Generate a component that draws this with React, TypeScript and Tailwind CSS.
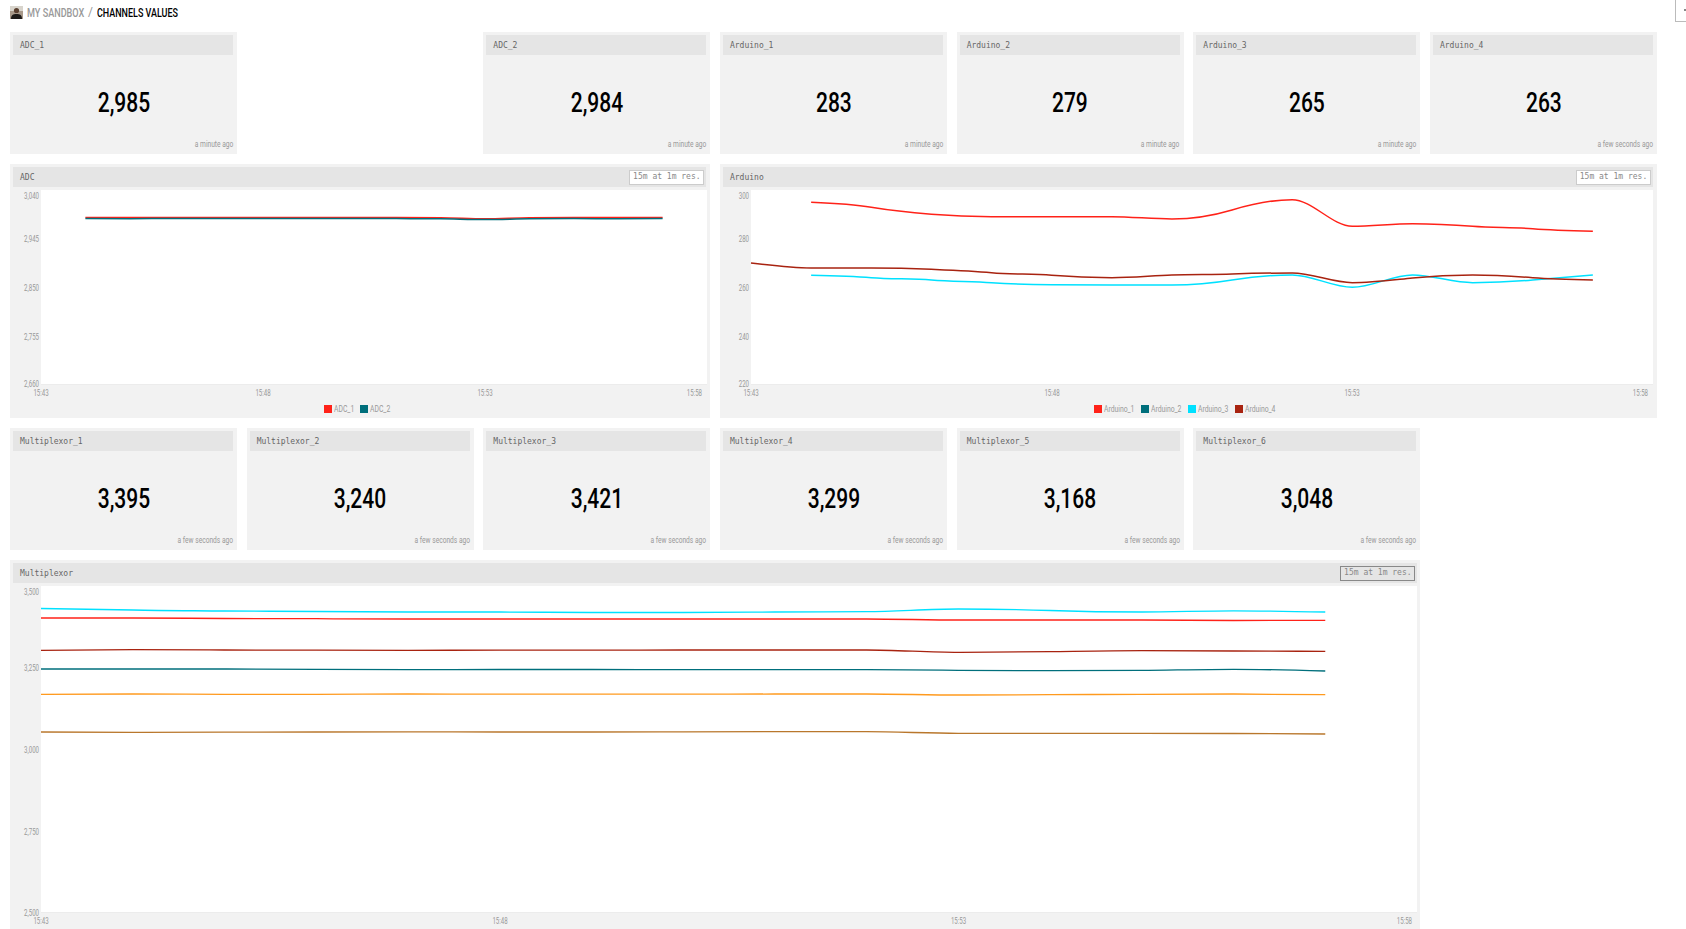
const cardFont = "font-['Roboto',sans-serif]";
const monoFont = "font-['DejaVu_Sans_Mono',monospace]";

type Series = { color: string; from: number; ys: number[] };

const RED = "#ff2219";
const TEAL = "#006f7c";
const CYAN = "#00e1ff";
const MAROON = "#a82310";
const ORANGE = "#ff9a1e";
const BROWN = "#b9772c";

// monotone line through points one minute apart
function linePath(s: Series, left: number, step: number) {
  const ys = s.ys;
  const n = ys.length;
  const m = ys.slice(1).map((y, i) => (y - ys[i]) / step);
  const t = ys.map((_, i) => {
    if (i === 0 || i === n - 1) return 0;
    const a = m[i - 1];
    const b = m[i];
    if (a * b <= 0) return 0;
    return Math.sign(a) * Math.min(Math.abs(a), Math.abs(b), 0.5 * Math.abs(a + b)) * 2;
  });
  t[0] = (3 * m[0] - t[1]) / 2;
  t[n - 1] = (3 * m[n - 2] - t[n - 2]) / 2;
  const xAt = (i: number) => left + (s.from + i) * step;
  let d = `M${xAt(0)} ${ys[0]}`;
  for (let i = 0; i < n - 1; i++) {
    const c1y = ys[i] + (t[i] * step) / 3;
    const c2y = ys[i + 1] - (t[i + 1] * step) / 3;
    d += ` C${xAt(i) + step / 3} ${c1y} ${xAt(i + 1) - step / 3} ${c2y} ${xAt(i + 1)} ${ys[i + 1]}`;
  }
  return d;
}

function Value({ name, value, ago }: { name: string; value: string; ago: string }) {
  return (
    <div className="h-[122px] bg-[#f2f2f2] pl-[3px] pr-[4px] pt-[3px] flex flex-col">
      <div className={`h-5 shrink-0 bg-[#e5e5e5] pl-[7px] pt-[1px] flex items-center ${monoFont} text-[8px] text-[#666]`}>
        {name}
      </div>
      <div className="flex-1 flex items-center justify-center pt-[12px] pl-[1px]">
        <span className={`inline-block scale-x-[0.75] ${cardFont} font-medium text-[28px] leading-none text-black`}>
          {value}
        </span>
      </div>
      <div className="h-[16px] shrink-0 flex justify-end">
        <span className={`inline-block origin-right scale-x-[0.78] ${cardFont} text-[8.5px] leading-[12px] text-[#999] whitespace-nowrap`}>
          {ago}
        </span>
      </div>
    </div>
  );
}

function Range({ dark }: { dark?: boolean }) {
  return (
    <div
      className={
        dark
          ? `w-[75px] h-[15px] border border-[#888] flex items-center justify-center ${monoFont} text-[8px] text-[#888]`
          : `w-[75px] h-[15px] border border-[#ccc] bg-white flex items-center justify-center ${monoFont} text-[8px] text-[#888]`
      }
    >
      15m at 1m res.
    </div>
  );
}

function Axis({ x, y, anchor = "end", label }: { x: number; y: number; anchor?: "end" | "start" | "middle"; label: string }) {
  return (
    <text
      transform={`translate(${x} ${y}) scale(0.72 1)`}
      textAnchor={anchor}
      fontFamily="Roboto, sans-serif"
      fontSize="8.5"
      fill="#999"
    >
      {label}
    </text>
  );
}

type ChartProps = {
  width: number;
  height: number;
  plotW: number;
  plotH: number;
  stroke?: number;
  yLabels: [string, number][];
  xLabels: [string, number][];
  series: Series[];
};

// coordinates are relative to the chart area under the panel header
function Chart({ width, height, plotW, plotH, stroke = 1.3, yLabels, xLabels, series }: ChartProps) {
  const step = plotW / 15;
  return (
    <svg width={width} height={height} className="block">
      <rect x="28" y="0" width={plotW} height={plotH} fill="#fff" />
      <line x1="28" x2={28 + plotW} y1={plotH + 0.5} y2={plotH + 0.5} stroke="#ececec" />
      {yLabels.map(([label, y]) => (
        <Axis key={label} x={26} y={y} label={label} />
      ))}
      {xLabels.map(([label, x], i) => (
        <Axis key={label} x={x} y={plotH + 12} anchor={i === xLabels.length - 1 ? "end" : "middle"} label={label} />
      ))}
      {series.map((s) => (
        <path key={s.color} d={linePath(s, 28, step)} fill="none" stroke={s.color} strokeWidth={stroke} />
      ))}
    </svg>
  );
}

function Legend({ items, labelClass }: { items: [string, string][]; labelClass: string }) {
  return (
    <div className="h-[20px] flex items-start justify-center gap-[7px] pt-[6px] pr-[7px]">
      {items.map(([name, color]) => (
        <div key={name} className="flex items-center gap-[2px]">
          <span className="w-2 h-2" style={{ backgroundColor: color }} />
          <span className={`inline-block ${labelClass} origin-left scale-x-[0.8] ${cardFont} text-[8.5px] leading-[10px] text-[#999] whitespace-nowrap`}>
            {name}
          </span>
        </div>
      ))}
    </div>
  );
}

function Panel({ title, dark, children, className }: { title: string; dark?: boolean; children: React.ReactNode; className: string }) {
  return (
    <div className={`bg-[#f2f2f2] pl-[3px] pt-[3px] ${className}`}>
      <div className={`h-5 mb-[3px] bg-[#e5e5e5] pl-[7px] pr-[2px] flex items-center justify-between ${monoFont} text-[8px] text-[#666]`}>
        <span className="pt-[1px]">{title}</span>
        <Range dark={dark} />
      </div>
      {children}
    </div>
  );
}

const arduino: Series[] = [
  { color: RED, from: 1, ys: [12.3, 17.3, 24.3, 26.7, 26.7, 26.7, 29, 20, 9.7, 36.3, 33.7, 36.3, 38.7, 41.3] },
  { color: CYAN, from: 1, ys: [85.3, 87.7, 90, 92.7, 94.7, 95, 95, 90, 85, 97.3, 85, 92.7, 90, 85] },
  { color: MAROON, from: 0, ys: [73, 78, 78, 79.3, 82.7, 85.3, 87.7, 85, 84, 83, 92.7, 88, 85, 87.7, 90] },
];

const adc: Series[] = [
  { color: RED, from: 1, ys: [27.4, 27.6, 27.6, 27.6, 27.6, 27.6, 27.6, 27.6, 27.7, 28.7, 27.7, 27.5, 27.5, 27.5] },
  { color: TEAL, from: 1, ys: [28.5, 28.7, 28.5, 28.5, 28.5, 28.5, 28.5, 28.6, 28.8, 29.5, 28.8, 28.6, 28.7, 28.6] },
];

const mux: Series[] = [
  { color: CYAN, from: 0, ys: [22.5, 24, 25, 25.5, 26, 26, 26.5, 26.5, 26, 25.7, 23, 24.5, 26, 24.8, 26] },
  { color: RED, from: 0, ys: [32, 32, 32.5, 32.7, 33, 33, 33, 33, 33, 33, 34, 34, 34, 34.5, 34.3] },
  { color: MAROON, from: 0, ys: [64.3, 63.7, 64, 64.2, 64.3, 64.2, 64.2, 64, 64, 64, 66.3, 65.7, 64.7, 65, 65.3] },
  { color: TEAL, from: 0, ys: [83, 83, 83, 83.3, 83.7, 83.5, 83.5, 83.7, 83.7, 83.7, 84.3, 84.7, 84.3, 83.3, 85] },
  { color: ORANGE, from: 0, ys: [108.3, 108, 108.3, 108.4, 108, 108.2, 108.2, 108.2, 108, 108, 109, 108.7, 108.3, 108, 108.7] },
  { color: BROWN, from: 0, ys: [146, 146.3, 146.2, 146, 145.8, 146, 146, 145.8, 145.7, 145.7, 147.3, 147.3, 147.3, 147.5, 148] },
];

export default function App() {
  return (
    <div className="relative h-[929px] overflow-hidden bg-white">
      <div className="h-[32px] pl-[10px] pt-[6px] flex items-start">
        <svg width="13" height="13" viewBox="0 0 13 13" className="block mr-[4px]">
          <rect width="13" height="13" fill="#a8998a" />
          <rect y="0" width="13" height="5" fill="#d8d4cc" />
          <circle cx="6.5" cy="4.5" r="2.6" fill="#5a4030" />
          <path d="M1 13 C1 9 3 8 6.5 8 C10 8 12 9 12 13 Z" fill="#1d1a18" />
        </svg>
        <span className={`inline-block w-[57px] origin-left scale-x-[0.7] ${cardFont} font-medium text-[13px] leading-[13px] text-[#999] whitespace-nowrap`}>
          MY SANDBOX
        </span>
        <span className={`inline-block w-[13px] ${cardFont} text-[12px] leading-[13px] text-[#999] pl-[4px]`}>/</span>
        <span className={`inline-block w-[81px] origin-left scale-x-[0.69] ${cardFont} font-medium text-[13px] leading-[13px] text-black whitespace-nowrap`}>
          CHANNELS VALUES
        </span>
      </div>
      <div className="absolute right-0 top-0 w-[11px] h-[22px] border-l border-b border-[#bbb]">
        <span className="absolute right-0 top-[9px] w-[2px] h-[2px] bg-[#888]" />
      </div>

      <div className="w-[1647px] ml-[10px] grid grid-cols-7 gap-x-[9.67px] gap-y-[10px]">
        <Value name="ADC_1" value="2,985" ago="a minute ago" />
        <div />
        <Value name="ADC_2" value="2,984" ago="a minute ago" />
        <Value name="Arduino_1" value="283" ago="a minute ago" />
        <Value name="Arduino_2" value="279" ago="a minute ago" />
        <Value name="Arduino_3" value="265" ago="a minute ago" />
        <Value name="Arduino_4" value="263" ago="a few seconds ago" />

        <Panel title="ADC" className="col-span-3 h-[254px] pr-[4px]">
          <Chart
            width={694}
            height={208}
            plotW={666}
            plotH={194}
            stroke={1.5}
            yLabels={[["3,040", 9], ["2,945", 52], ["2,850", 101], ["2,755", 150], ["2,660", 197]]}
            xLabels={[["15:43", 28], ["15:48", 250], ["15:53", 472], ["15:58", 689]]}
            series={adc}
          />
          <Legend labelClass="w-[19px]" items={[["ADC_1", RED], ["ADC_2", TEAL]]} />
        </Panel>
        <Panel title="Arduino" className="col-span-4 h-[254px] pr-[4px]">
          <Chart
            width={930}
            height={208}
            plotW={902}
            plotH={194}
            stroke={1.5}
            yLabels={[["300", 9], ["280", 52], ["260", 101], ["240", 150], ["220", 197]]}
            xLabels={[["15:43", 28], ["15:48", 329], ["15:53", 629], ["15:58", 925]]}
            series={arduino}
          />
          <Legend labelClass="w-[30px]" items={[["Arduino_1", RED], ["Arduino_2", TEAL], ["Arduino_3", CYAN], ["Arduino_4", MAROON]]} />
        </Panel>

        <Value name="Multiplexor_1" value="3,395" ago="a few seconds ago" />
        <Value name="Multiplexor_2" value="3,240" ago="a few seconds ago" />
        <Value name="Multiplexor_3" value="3,421" ago="a few seconds ago" />
        <Value name="Multiplexor_4" value="3,299" ago="a few seconds ago" />
        <Value name="Multiplexor_5" value="3,168" ago="a few seconds ago" />
        <Value name="Multiplexor_6" value="3,048" ago="a few seconds ago" />
        <div />

        <Panel title="Multiplexor" dark className="col-span-6 h-[369px] pr-[3px]">
          <Chart
            width={1404}
            height={340}
            plotW={1376}
            plotH={326}
            yLabels={[["3,500", 9], ["3,250", 85], ["3,000", 167], ["2,750", 249], ["2,500", 330]]}
            xLabels={[["15:43", 28], ["15:48", 487], ["15:53", 945.5], ["15:58", 1399]]}
            series={mux}
          />
        </Panel>
      </div>
    </div>
  );
}
